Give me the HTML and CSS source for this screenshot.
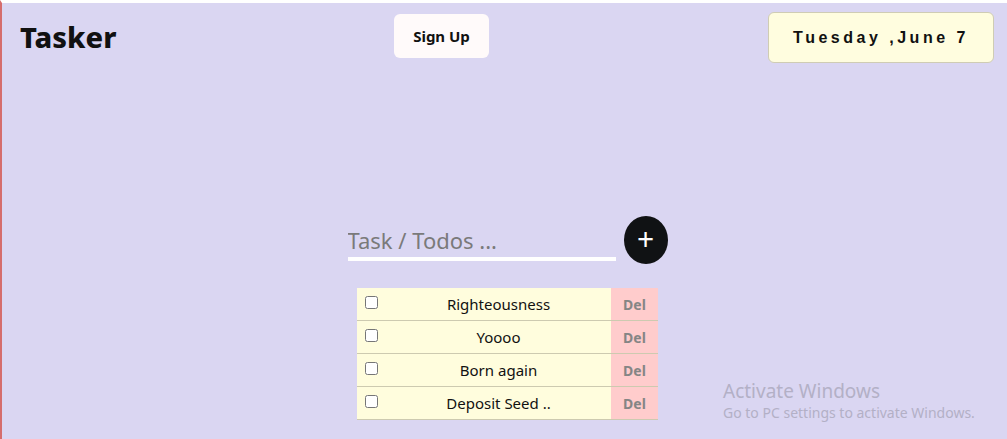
FILE: index.html
```html
<!DOCTYPE html>
<html>
<head>
<meta charset="utf-8">
<link rel="stylesheet" href="styles.css">
</head>
<body>
<header class="header">
  <h1 class="logo">Tasker</h1>
  <button class="signup">Sign Up</button>
  <div class="date">Tuesday ,June 7</div>
</header>
<main class="main">
  <form class="task-form">
    <input class="task-input" type="text" placeholder="Task / Todos ...">
    <button class="add-btn" type="button">+</button>
  </form>
  <ul class="list">
    <li class="row"><span class="check"><input type="checkbox"></span><span class="text">Righteousness</span><span class="del">Del</span></li>
    <li class="row"><span class="check"><input type="checkbox"></span><span class="text">Yoooo</span><span class="del">Del</span></li>
    <li class="row"><span class="check"><input type="checkbox"></span><span class="text">Born again</span><span class="del">Del</span></li>
    <li class="row"><span class="check"><input type="checkbox"></span><span class="text">Deposit Seed ..</span><span class="del">Del</span></li>
  </ul>
</main>
<div class="watermark">
  <div class="wm-title">Activate Windows</div>
  <div class="wm-sub">Go to PC settings to activate Windows.</div>
</div>
</body>
</html>
```

FILE: styles.css
```css
html, body {
  height: 100%;
}
body {
  margin: 0;
  box-sizing: border-box;
  background: #dad6f2;
  border-top: 3px solid #ffffff;
  border-left: 2px solid #d56d6d;
  font-family: "Noto Sans", "Open Sans", sans-serif;
  overflow: hidden;
}
.header {
  display: flex;
  align-items: flex-start;
  padding: 9px 13px 0 18px;
}
.logo {
  margin: 0;
  width: 374px;
  font-size: 29px;
  font-weight: 800;
  line-height: 50px;
  color: #111;
}
.signup {
  margin-top: 2px;
  width: 95px;
  height: 44px;
  border: none;
  border-radius: 6px;
  background: #fffafa;
  font-family: "Noto Sans", sans-serif;
  font-weight: 700;
  font-size: 15px;
  color: #111;
  padding: 0;
}
.date {
  margin-left: auto;
  box-sizing: border-box;
  width: 226px;
  height: 51px;
  border: 1px solid #cfccb4;
  border-radius: 6px;
  background: #fffddf;
  font-family: "Liberation Sans", Arial, sans-serif;
  font-weight: 700;
  font-size: 16px;
  letter-spacing: 3.5px;
  color: #111;
  display: flex;
  align-items: center;
  justify-content: center;
  padding-left: 0;
}
.main {
  display: flex;
  flex-direction: column;
  align-items: center;
  padding-left: 6px;
  margin-top: 153px;
}
.task-form {
  display: flex;
  align-items: flex-start;
  gap: 8px;
  margin: 0;
}
.task-input {
  box-sizing: border-box;
  width: 268px;
  height: 45px;
  border: none;
  border-bottom: 4px solid #ffffff;
  background: transparent;
  font-family: "Noto Sans", sans-serif;
  font-size: 22px;
  padding: 6px 0 0 0;
  outline: none;
  color: #333;
}
.task-input::placeholder {
  color: #7a7a7a;
}
.add-btn {
  width: 44px;
  height: 48px;
  border-radius: 50%;
  border: none;
  background: #101214;
  color: #fff;
  font-size: 30px;
  line-height: 1;
  padding: 0 0 3px 0;
  font-family: "Noto Sans", sans-serif;
  font-weight: 400;
}
.list {
  list-style: none;
  margin: 24px 0 0 0;
  padding: 0;
  width: 301px;
}
.row {
  display: flex;
  height: 32px;
  border-bottom: 1px solid #cdcab0;
  background: #fffddd;
}
.check {
  width: 29px;
  display: flex;
  align-items: flex-start;
  justify-content: center;
}
.check input {
  margin: 8px 0 0 0;
  width: 13px;
  height: 13px;
}
.text {
  flex: 1;
  display: flex;
  align-items: center;
  justify-content: center;
  font-size: 15px;
  font-weight: 400;
  color: #111;
}
.del {
  width: 47px;
  background: #ffcccc;
  color: #858585;
  font-weight: 700;
  font-size: 14px;
  display: flex;
  align-items: center;
  justify-content: center;
  font-family: "Noto Sans", sans-serif;
}
.watermark {
  position: absolute;
  left: 723px;
  top: 379px;
  color: #b3b0c6;
  font-family: "Noto Sans", "Open Sans", sans-serif;
}
.wm-title {
  font-size: 19px;
  line-height: 24px;
}
.wm-sub {
  font-size: 14px;
  line-height: 20px;
}
```
